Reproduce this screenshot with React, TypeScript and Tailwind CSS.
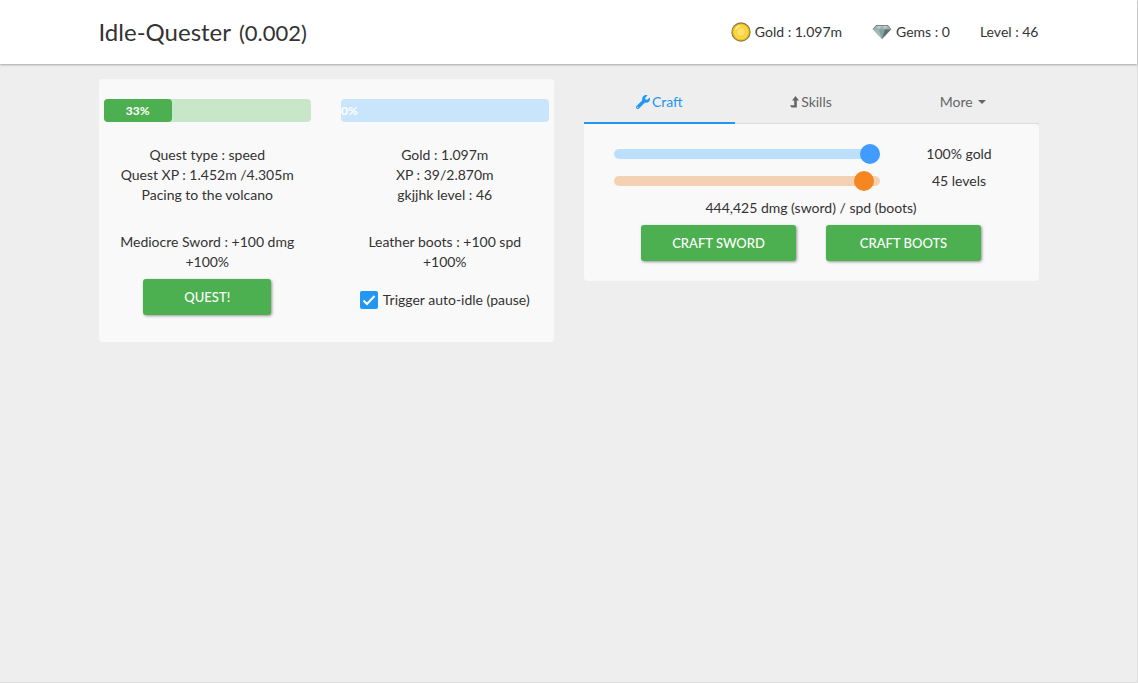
import React, { useState } from "react";
import { FaWrench } from "react-icons/fa";

function CoinIcon() {
  return (
    <svg width="20" height="20" viewBox="0 0 20 20" aria-hidden="true">
      <circle cx="10" cy="10" r="9.7" fill="#8b7a48" />
      <circle cx="10" cy="10" r="8.6" fill="#eebb1e" />
      <circle cx="10" cy="10" r="7.4" fill="#fbd73e" />
      <circle cx="10" cy="10" r="4.5" fill="#fde067" stroke="#f7cd45" strokeWidth="1" />
      <path d="M4.5 7.5A6 6 0 0 1 9 4" fill="none" stroke="#fff2a0" strokeWidth="1.4" />
    </svg>
  );
}

function GemIcon() {
  return (
    <svg width="20" height="20" viewBox="0 0 20 20" aria-hidden="true">
      <path d="M4 3.5h12l3 4L10 17 1 7.5z" fill="#8d9b9d" />
      <path d="M4 3.5h12l3 4H1z" fill="#a3afb1" />
      <path d="M4 3.5 7 7.5 10 3.5 13 7.5 16 3.5z" fill="#bccaca" />
      <path d="M1 7.5h6L10 17z" fill="#a9b8b9" />
      <path d="M7 7.5h6L10 17z" fill="#7fa3a3" />
      <path d="M13 7.5h6L10 17z" fill="#5f6d70" />
      <path d="M1 7.5 4 3.5h12l3 4" fill="none" stroke="#68777a" strokeWidth=".8" />
    </svg>
  );
}

function LevelUpIcon() {
  return (
    <svg width="9" height="12" viewBox="0 0 9 12" fill="currentColor" aria-hidden="true">
      <path d="M5.500 0 9 4.500H6.800V11.500H1.400L0 9.300H4.200V4.500H2z" />
    </svg>
  );
}

function Stat({ icon, children }: { icon?: React.ReactNode; children: React.ReactNode }) {
  return (
    <li className="flex items-center gap-1">
      {icon}
      <span>{children}</span>
    </li>
  );
}

function Button({ children, className = "" }: { children: React.ReactNode; className?: string }) {
  return (
    <button
      type="button"
      className={`h-9 rounded-[3px] bg-[#4caf50] text-[13px] font-medium text-white uppercase shadow-[1px_1px_3px_rgba(0,0,0,0.4)] hover:bg-[#439a46] ${className}`}
    >
      {children}
    </button>
  );
}

function Progress({ value, label, track, bar }: { value: number; label: string; track: string; bar: string }) {
  return (
    <div
      role="progressbar"
      aria-label={label}
      aria-valuenow={value}
      className={`h-[23px] overflow-hidden rounded text-xs font-bold text-white ${track}`}
    >
      <div className={`flex h-full min-w-min items-center justify-center rounded-r-sm pt-px ${bar}`} style={{ width: `${value}%` }}>
        {value}%
      </div>
    </div>
  );
}

const rangeBase =
  "h-5 w-full cursor-pointer appearance-none bg-transparent [&::-webkit-slider-runnable-track]:h-[10px] [&::-webkit-slider-runnable-track]:rounded-full [&::-webkit-slider-thumb]:-mt-[5px] [&::-webkit-slider-thumb]:size-5 [&::-webkit-slider-thumb]:appearance-none [&::-webkit-slider-thumb]:rounded-full";

export default function App() {
  const [gold, setGold] = useState(100);
  const [levels, setLevels] = useState(45);
  const [auto, setAuto] = useState(true);

  return (
    <div className="flex min-h-screen flex-col border-r border-b border-[#dddddd] bg-[#eeeeee] font-['Lato',sans-serif] text-sm leading-5 text-[#333333]">
      <header className="bg-white shadow-[0_1px_2px_rgba(0,0,0,0.3)]">
        <div className="mx-auto flex h-16 max-w-[970px] items-center justify-between px-[15px]">
          <h1 className="flex items-baseline gap-2 text-2xl">
            Idle-Quester <span className="text-[22px]">(0.002)</span>
          </h1>
          <ul className="flex items-center gap-[30px]">
            <Stat icon={<CoinIcon />}>Gold : 1.097m</Stat>
            <Stat icon={<GemIcon />}>Gems : 0</Stat>
            <Stat>Level : 46</Stat>
          </ul>
        </div>
      </header>

      <main className="mx-auto grid w-full max-w-[970px] grid-cols-2 items-start gap-[30px] px-[15px] pt-[15px]">
        <section className="grid grid-cols-2 gap-x-[30px] rounded bg-[#f9f9f9] px-[5px] pt-5 pb-[27px] text-center">
          <div>
            <Progress value={33} label="Quest progress" track="bg-[#c8e7c9]" bar="bg-[#4caf50]" />
            <div className="pt-[23px]">
              <p>Quest type : speed</p>
              <p>Quest XP : 1.452m /4.305m</p>
              <p>Pacing to the volcano</p>
            </div>
            <div className="pt-[27px]">
              <p>Mediocre Sword : +100 dmg</p>
              <p>+100%</p>
            </div>
            <Button className="mt-[7px] w-32">Quest!</Button>
          </div>
          <div>
            <Progress value={0} label="Experience" track="bg-[#c9e5fc]" bar="bg-transparent" />
            <div className="pt-[23px]">
              <p>Gold : 1.097m</p>
              <p>XP : 39/2.870m</p>
              <p>gkjjhk level : 46</p>
            </div>
            <div className="pt-[27px]">
              <p>Leather boots : +100 spd</p>
              <p>+100%</p>
            </div>
            <label className="mt-[18px] flex items-center justify-center gap-[5px]">
              <span className="grid size-[18px]">
                <input
                  type="checkbox"
                  checked={auto}
                  onChange={(e) => setAuto(e.target.checked)}
                  className="peer col-start-1 row-start-1 size-[18px] appearance-none rounded-xs border-2 border-[#666666] checked:border-[#2196f3] checked:bg-[#2196f3]"
                />
                <svg
                  viewBox="0 0 18 18"
                  aria-hidden="true"
                  className="pointer-events-none col-start-1 row-start-1 size-[18px] opacity-0 peer-checked:opacity-100"
                >
                  <path d="M3.5 9.5 7 13 14.5 5" fill="none" stroke="#fff" strokeWidth="2" />
                </svg>
              </span>
              Trigger auto-idle (pause)
            </label>
          </div>
        </section>

        <section>
          <nav className="grid h-[45px] grid-cols-3 text-[#666666]">
            <a href="#craft" className="flex items-center justify-center gap-0.5 border-b-2 border-[#2196f3] pt-0.5 text-[#2196f3]">
              <FaWrench size={14} aria-hidden="true" />
              Craft
            </a>
            <a href="#skills" className="flex items-center justify-center gap-0.5 border-b border-[#dddddd] pt-0.5">
              <LevelUpIcon />
              Skills
            </a>
            <a href="#more" className="flex items-center justify-center gap-[5px] border-b border-[#dddddd] pt-0.5">
              More
              <svg width="8" height="4" viewBox="0 0 8 4" fill="currentColor" aria-hidden="true">
                <path d="M0 0h8L4 4z" />
              </svg>
            </a>
          </nav>
          <div className="rounded-b rounded-tr bg-[#f9f9f9] py-5 text-center">
            <div className="grid grid-cols-[minmax(0,1fr)_159px] gap-y-[7px]">
              <div className="flex pl-[30px]">
                <input
                  id="gold"
                  type="range"
                  min={0}
                  max={100}
                  value={gold}
                  onChange={(e) => setGold(Number(e.target.value))}
                  className={`${rangeBase} [&::-webkit-slider-runnable-track]:bg-[#bddffe] [&::-webkit-slider-thumb]:bg-[#409cff]`}
                />
              </div>
              <label htmlFor="gold">{gold}% gold</label>
              <div className="flex pl-[30px]">
                <input
                  id="levels"
                  type="range"
                  min={0}
                  max={46}
                  value={levels}
                  onChange={(e) => setLevels(Number(e.target.value))}
                  className={`${rangeBase} [&::-webkit-slider-runnable-track]:bg-[#f4d1b2] [&::-webkit-slider-thumb]:bg-[#f58723]`}
                />
              </div>
              <label htmlFor="levels">{levels} levels</label>
            </div>
            <p className="pt-[7px]">444,425 dmg (sword) / spd (boots)</p>
            <div className="flex justify-center gap-[30px] pt-[7px]">
              <Button className="w-[155px]">Craft sword</Button>
              <Button className="w-[155px]">Craft boots</Button>
            </div>
          </div>
        </section>
      </main>
    </div>
  );
}
